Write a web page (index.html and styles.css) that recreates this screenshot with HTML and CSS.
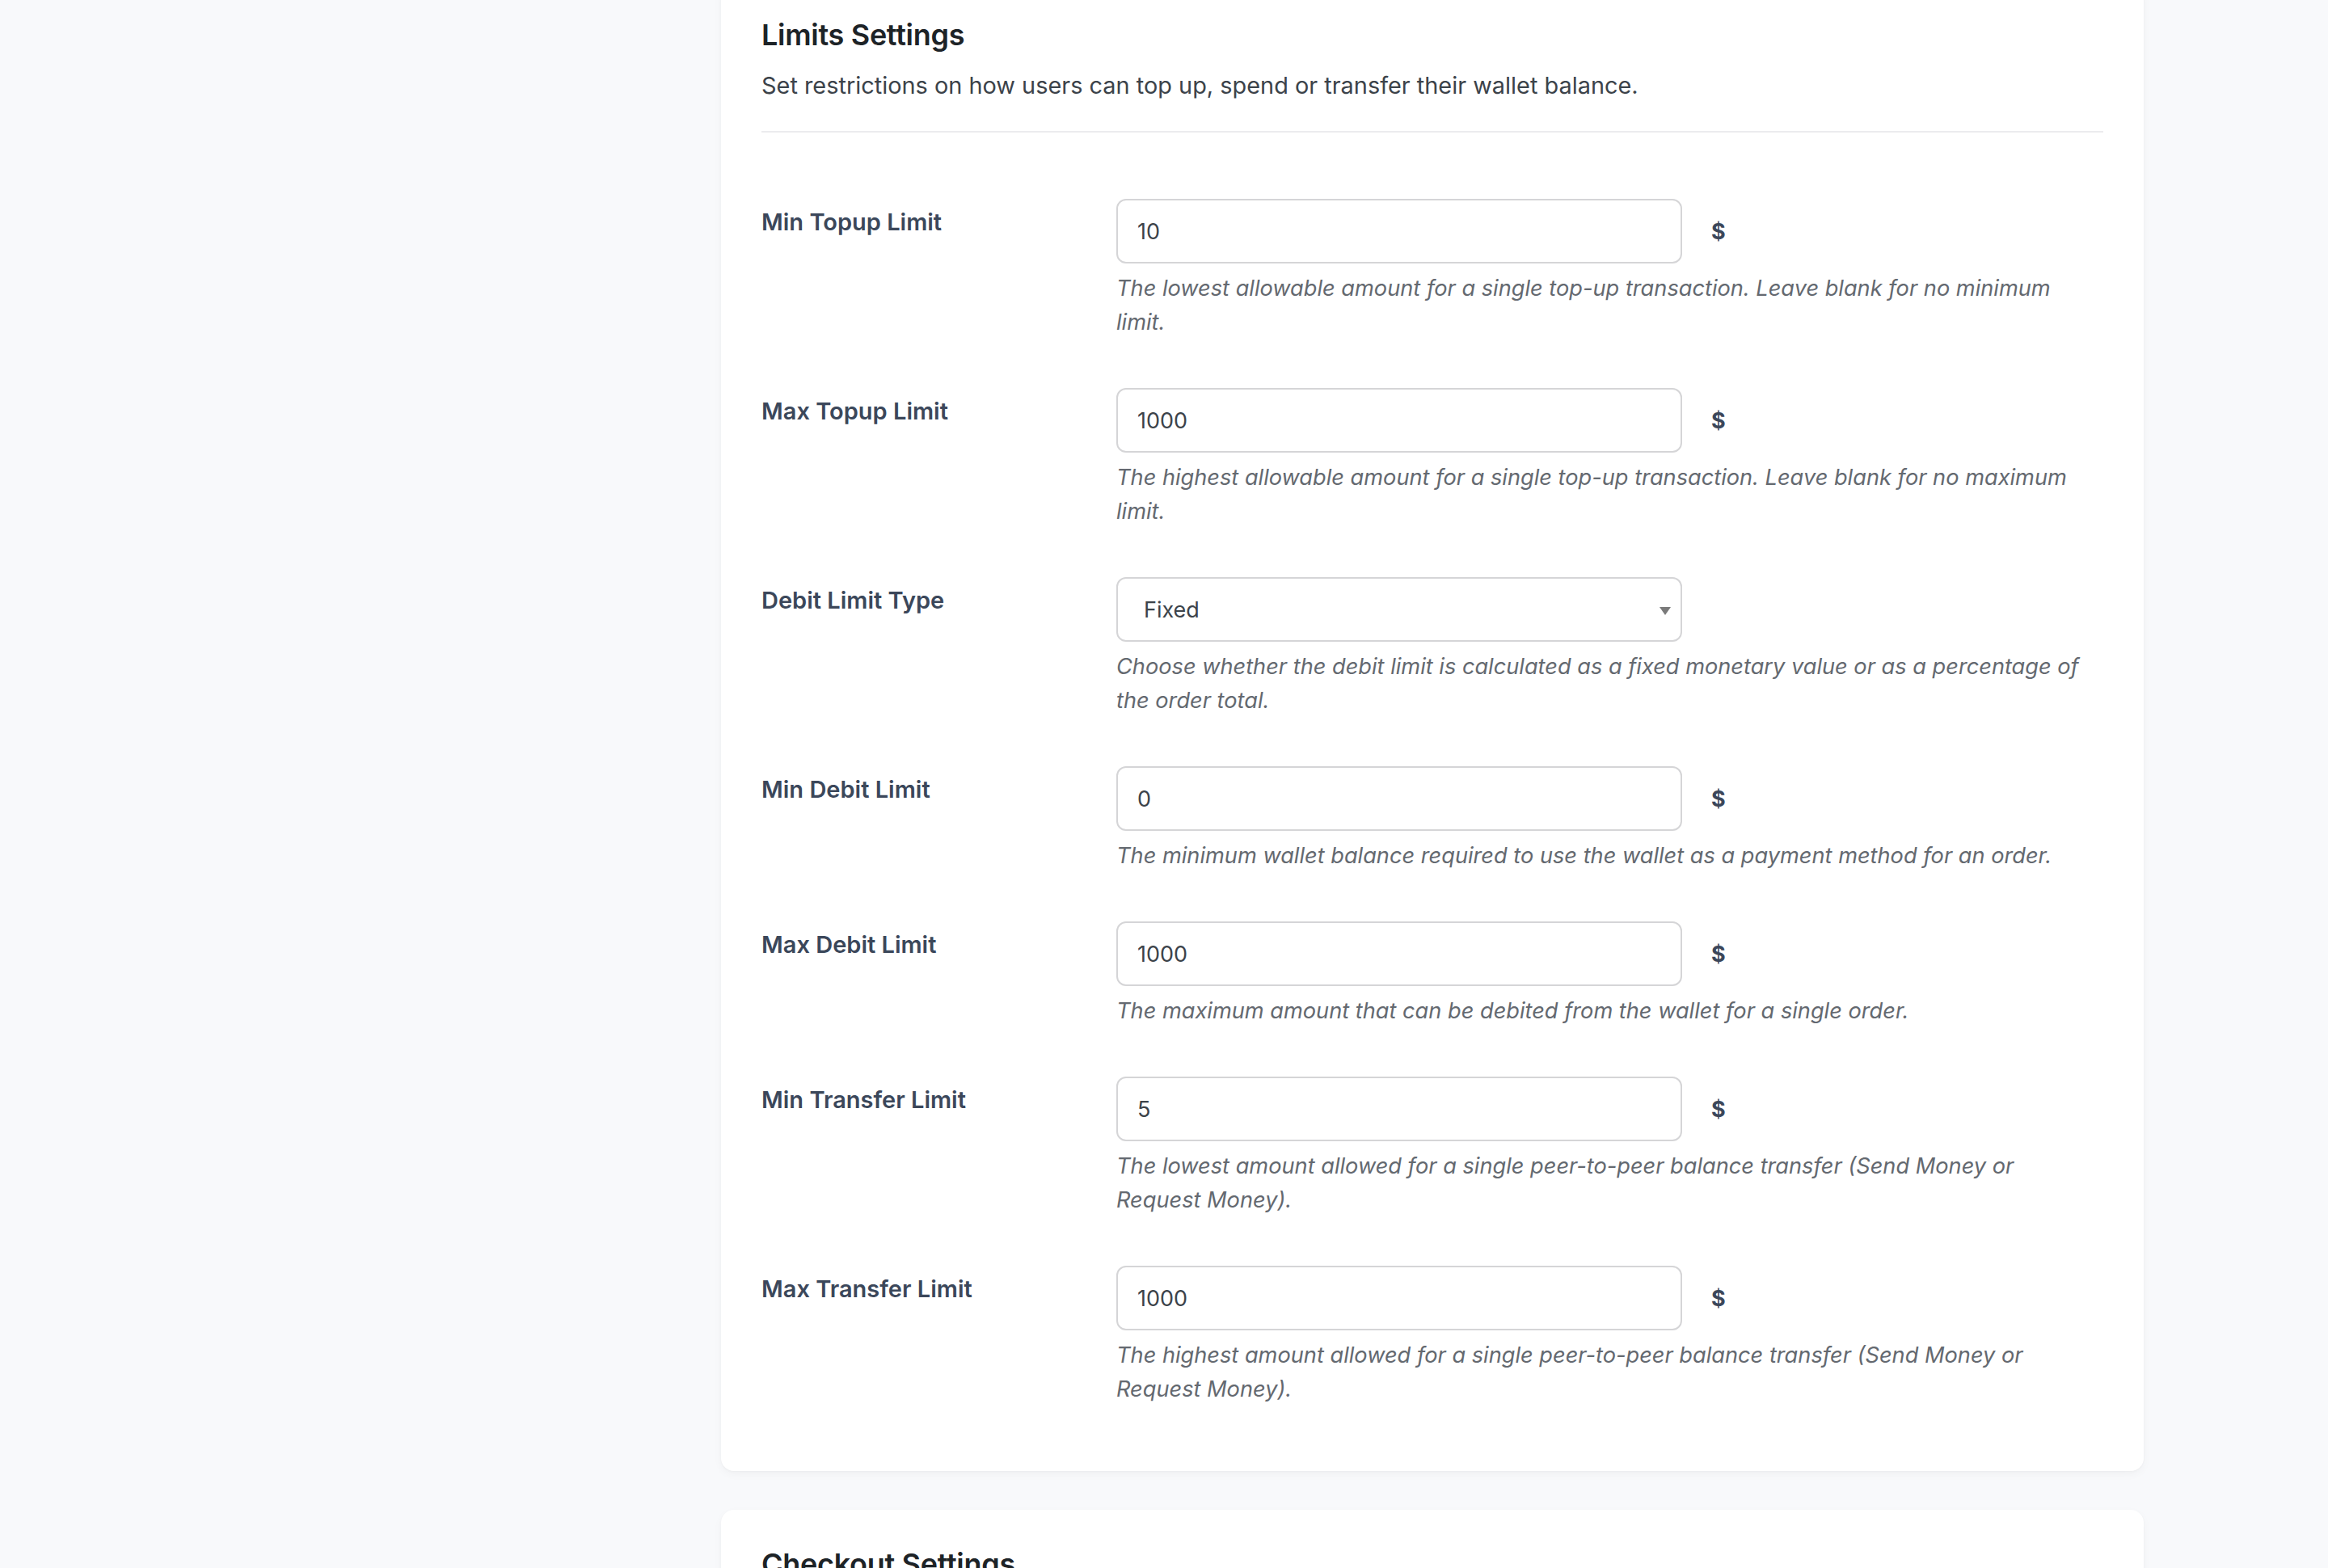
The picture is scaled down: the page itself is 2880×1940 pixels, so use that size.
FILE: index.html
```html
<!DOCTYPE html>
<html lang="en">
<head>
    <meta charset="UTF-8">
    <meta name="viewport" content="width=device-width, initial-scale=1.0">
    <title>Wallet Settings</title>
    <link rel="stylesheet" href="styles.css">
</head>
<body>
    <div class="wrap">
        <div class="card">
            <div class="card-header">
                <h2>Limits Settings</h2>
                <p>Set restrictions on how users can top up, spend or transfer their wallet balance.</p>
            </div>

            <div class="field-row">
                <label class="field-label" for="minTopup">Min Topup Limit</label>
                <div class="field-body">
                    <div class="field-control">
                        <input type="text" id="minTopup" class="text-input" value="10">
                        <span class="unit">$</span>
                    </div>
                    <p class="help">The lowest allowable amount for a single top-up transaction. Leave blank for no minimum limit.</p>
                </div>
            </div>

            <div class="field-row">
                <label class="field-label" for="maxTopup">Max Topup Limit</label>
                <div class="field-body">
                    <div class="field-control">
                        <input type="text" id="maxTopup" class="text-input" value="1000">
                        <span class="unit">$</span>
                    </div>
                    <p class="help">The highest allowable amount for a single top-up transaction. Leave blank for no maximum limit.</p>
                </div>
            </div>

            <div class="field-row">
                <label class="field-label" for="debitType">Debit Limit Type</label>
                <div class="field-body">
                    <div class="field-control">
                        <div class="select-wrap">
                            <select id="debitType" class="select-input">
                                <option selected>Fixed</option>
                                <option>Percentage</option>
                            </select>
                        </div>
                    </div>
                    <p class="help">Choose whether the debit limit is calculated as a fixed monetary value or as a percentage of the order total.</p>
                </div>
            </div>

            <div class="field-row">
                <label class="field-label" for="minDebit">Min Debit Limit</label>
                <div class="field-body">
                    <div class="field-control">
                        <input type="text" id="minDebit" class="text-input" value="0">
                        <span class="unit">$</span>
                    </div>
                    <p class="help">The minimum wallet balance required to use the wallet as a payment method for an order.</p>
                </div>
            </div>

            <div class="field-row">
                <label class="field-label" for="maxDebit">Max Debit Limit</label>
                <div class="field-body">
                    <div class="field-control">
                        <input type="text" id="maxDebit" class="text-input" value="1000">
                        <span class="unit">$</span>
                    </div>
                    <p class="help">The maximum amount that can be debited from the wallet for a single order.</p>
                </div>
            </div>

            <div class="field-row">
                <label class="field-label" for="minTransfer">Min Transfer Limit</label>
                <div class="field-body">
                    <div class="field-control">
                        <input type="text" id="minTransfer" class="text-input" value="5">
                        <span class="unit">$</span>
                    </div>
                    <p class="help">The lowest amount allowed for a single peer-to-peer balance transfer (Send Money or Request Money).</p>
                </div>
            </div>

            <div class="field-row">
                <label class="field-label" for="maxTransfer">Max Transfer Limit</label>
                <div class="field-body">
                    <div class="field-control">
                        <input type="text" id="maxTransfer" class="text-input" value="1000">
                        <span class="unit">$</span>
                    </div>
                    <p class="help">The highest amount allowed for a single peer-to-peer balance transfer (Send Money or Request Money).</p>
                </div>
            </div>
        </div>

        <div class="card">
            <div class="card-header">
                <h2>Checkout Settings</h2>
                <p>Control how the wallet behaves on the checkout page.</p>
            </div>
        </div>
    </div>
</body>
</html>
```

FILE: styles.css
```css
* {
    margin: 0;
    padding: 0;
    box-sizing: border-box;
}

body {
    font-family: Inter, 'Noto Sans', sans-serif;
    background: #f8f9fb;
    color: #3c434a;
    overflow: hidden;
}

.wrap {
    width: 1760px;
    margin: -24px 0 0 892px;
    display: flex;
    flex-direction: column;
    gap: 48px;
}

.card {
    background: #fff;
    border-radius: 16px;
    padding: 44px 50px 50px;
    box-shadow: 0 4px 12px rgba(0, 0, 0, 0.035), 0 1px 3px rgba(0, 0, 0, 0.03);
}

.card-header {
    padding-bottom: 35px;
    border-bottom: 2px solid #ececee;
    margin-bottom: 52px;
}

.card-header h2 {
    font-size: 36px;
    line-height: 47px;
    font-weight: 600;
    color: #1d2327;
    letter-spacing: -0.3px;
}

.card-header p {
    margin-top: 18px;
    font-size: 28.9px;
    line-height: 42px;
    color: #3c434a;
}

.field-row {
    display: grid;
    grid-template-columns: 439px 1fr;
    padding: 30px 0;
}

.field-label {
    padding-top: 9px;
    font-size: 29px;
    line-height: 40px;
    font-weight: 600;
    color: #3b475a;
}

.field-control {
    display: flex;
    align-items: center;
    gap: 36px;
}

.text-input,
.select-input {
    width: 700px;
    height: 80px;
    border: 2px solid #d5d5d7;
    border-radius: 12px;
    background: #fff;
    font-family: inherit;
    font-size: 27px;
    color: #3c434a;
    outline: none;
}

.text-input {
    padding: 0 24px;
}

.select-wrap {
    position: relative;
}

.select-input {
    display: block;
    padding: 0 60px 0 32px;
    appearance: none;
    -webkit-appearance: none;
}

.select-wrap::after {
    content: '';
    position: absolute;
    right: 14px;
    top: 37px;
    border-left: 7px solid transparent;
    border-right: 7px solid transparent;
    border-top: 10px solid #7a7a7a;
}

.unit {
    font-size: 27px;
    font-weight: 700;
    color: #3b475a;
}

.help {
    margin-top: 10px;
    font-size: 27.2px;
    line-height: 42px;
    font-style: italic;
    color: #646970;
}
```
